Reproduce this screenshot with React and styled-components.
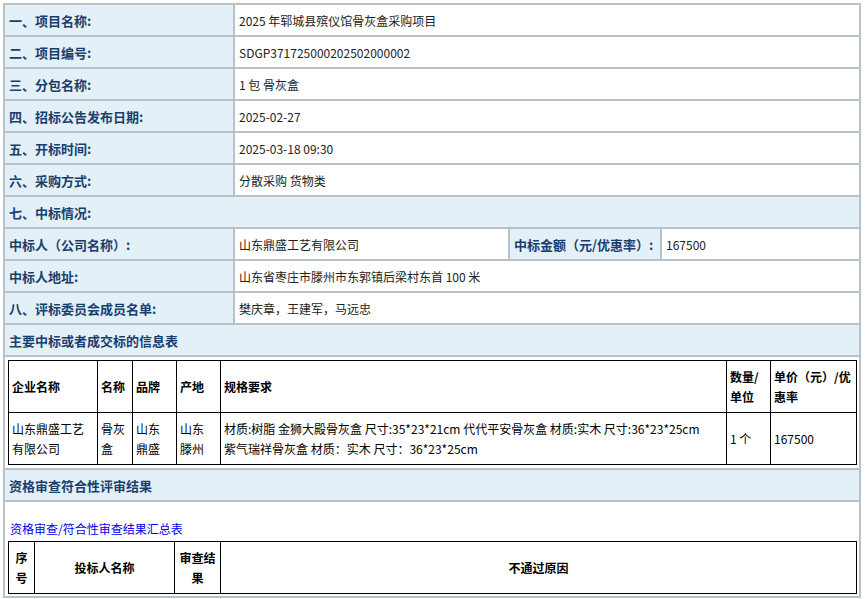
import React from 'react';
import styled, { createGlobalStyle } from 'styled-components';

const Global = createGlobalStyle`
  body {
    margin: 0;
    background: #fff;
    font-family: "Liberation Sans", "Noto Sans CJK SC", sans-serif;
    font-size: 12px;
    color: #222;
  }
`;

const Page = styled.div`
  padding: 3px 6px 0 3px;
  width: 858px;
`;

const Outer = styled.table`
  width: 100%;
  border-collapse: collapse;
  table-layout: fixed;
`;

const Label = styled.td`
  height: 30px;
  padding: 0 4px;
  background: #e3f0f8;
  border: 2px solid #b9c1cb;
  color: #183e6e;
  font-weight: bold;
  font-size: 13px;
  font-family: "Noto Sans CJK SC", sans-serif;
`;

const Value = styled.td`
  height: 30px;
  padding: 0 4px;
  border: 2px solid #b9c1cb;
  font-size: 12px;
  color: #222;
  font-family: "Noto Sans CJK SC", sans-serif;
`;

const Holder = styled.td`
  border: 2px solid #b9c1cb;
  padding: ${p => p.$pad || '2px 2px'};
`;

const Inner = styled.table`
  width: 100%;
  border-collapse: collapse;
  table-layout: fixed;
  font-family: "Noto Sans CJK SC", sans-serif;
`;

const Th = styled.td`
  border: 1px solid #000;
  height: ${p => p.$h || 51}px;
  padding: 0 3px;
  font-weight: bold;
  font-size: 12px;
  line-height: 20px;
  text-align: ${p => (p.$center ? 'center' : 'left')};
  color: #000;
`;

const Td = styled.td`
  border: 1px solid #000;
  height: 51px;
  padding: 0 6px 0 3px;
  font-size: 12px;
  line-height: 20px;
  color: #000;
`;

const Link = styled.div`
  color: #0000ee;
  font-size: 12px;
  margin: 18px 0 4px 2px;
  font-family: "Noto Sans CJK SC", sans-serif;
`;

const basic = [
  ['一、项目名称:', '2025 年郓城县殡仪馆骨灰盒采购项目'],
  ['二、项目编号:', 'SDGP371725000202502000002'],
  ['三、分包名称:', '1 包 骨灰盒'],
  ['四、招标公告发布日期:', '2025-02-27'],
  ['五、开标时间:', '2025-03-18 09:30'],
  ['六、采购方式:', '分散采购 货物类'],
];

export default function App() {
  return (
    <Page>
      <Global />
      <Outer>
        <colgroup>
          <col style={{ width: 230 }} />
          <col style={{ width: 275 }} />
          <col style={{ width: 152 }} />
          <col />
        </colgroup>
        <tbody>
          {basic.map(([l, v]) => (
            <tr key={l}>
              <Label>{l}</Label>
              <Value colSpan={3}>{v}</Value>
            </tr>
          ))}
          <tr>
            <Label colSpan={4}>七、中标情况:</Label>
          </tr>
          <tr>
            <Label>中标人（公司名称）:</Label>
            <Value>山东鼎盛工艺有限公司</Value>
            <Label>中标金额（元/优惠率）:</Label>
            <Value>167500</Value>
          </tr>
          <tr>
            <Label>中标人地址:</Label>
            <Value colSpan={3}>山东省枣庄市滕州市东郭镇后梁村东首 100 米</Value>
          </tr>
          <tr>
            <Label>八、评标委员会成员名单:</Label>
            <Value colSpan={3}>樊庆章，王建军，马远忠</Value>
          </tr>
          <tr>
            <Label colSpan={4}>主要中标或者成交标的信息表</Label>
          </tr>
          <tr>
            <Holder colSpan={4} $pad="3px 2px 3px 3px">
              <Inner>
                <colgroup>
                  <col style={{ width: 89 }} />
                  <col style={{ width: 35 }} />
                  <col style={{ width: 44 }} />
                  <col style={{ width: 44 }} />
                  <col />
                  <col style={{ width: 44 }} />
                  <col style={{ width: 86 }} />
                </colgroup>
                <tbody>
                  <tr>
                    <Th>企业名称</Th>
                    <Th>名称</Th>
                    <Th>品牌</Th>
                    <Th>产地</Th>
                    <Th>规格要求</Th>
                    <Th>数量/单位</Th>
                    <Th>单价（元）/优惠率</Th>
                  </tr>
                  <tr>
                    <Td>山东鼎盛工艺有限公司</Td>
                    <Td>骨灰盒</Td>
                    <Td>山东鼎盛</Td>
                    <Td>山东滕州</Td>
                    <Td>
                      材质:树脂 金狮大殿骨灰盒 尺寸:35*23*21cm 代代平安骨灰盒 材质:实木 尺寸:36*23*25cm
                      <br />
                      紫气瑞祥骨灰盒 材质：实木 尺寸：36*23*25cm
                    </Td>
                    <Td>1 个</Td>
                    <Td>167500</Td>
                  </tr>
                </tbody>
              </Inner>
            </Holder>
          </tr>
          <tr>
            <Label colSpan={4}>资格审查符合性评审结果</Label>
          </tr>
          <tr>
            <Holder colSpan={4} $pad="0 2px 2px 3px">
              <Link>资格审查/符合性审查结果汇总表</Link>
              <Inner>
                <colgroup>
                  <col style={{ width: 26 }} />
                  <col style={{ width: 140 }} />
                  <col style={{ width: 46 }} />
                  <col />
                </colgroup>
                <tbody>
                  <tr>
                    <Th $center>序号</Th>
                    <Th $center>投标人名称</Th>
                    <Th $center>审查结果</Th>
                    <Th $center>不通过原因</Th>
                  </tr>
                </tbody>
              </Inner>
            </Holder>
          </tr>
        </tbody>
      </Outer>
    </Page>
  );
}
